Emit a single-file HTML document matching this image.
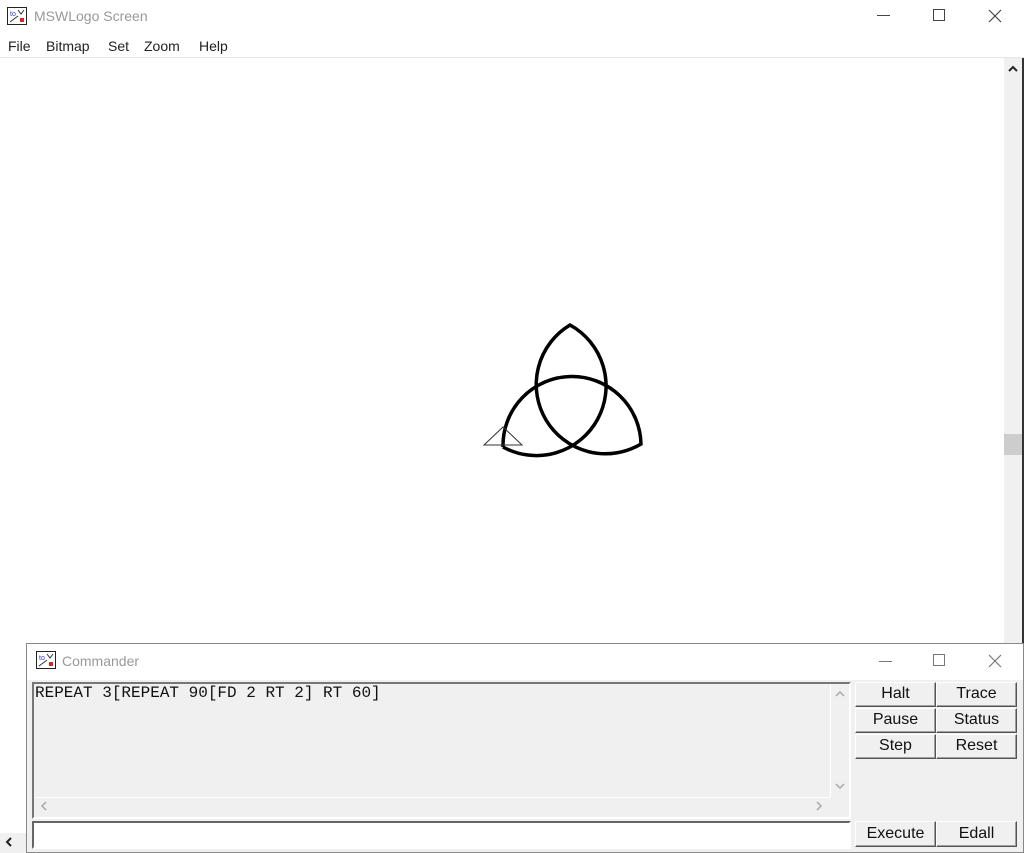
<!DOCTYPE html>
<html><head><style>
*{margin:0;padding:0;box-sizing:border-box}
body{width:1024px;height:853px;position:relative;background:#fff;font-family:"Liberation Sans",sans-serif;overflow:hidden}
.abs{position:absolute}
.title{color:#999;font-size:14px}
.menu span{position:absolute;top:38px;font-size:14px;color:#222}
.btn{position:absolute;background:#f0f0f0;border:1px solid;border-color:#fff #555 #555 #fff;box-shadow:inset -1px -1px 0 #a0a0a0;font-size:16px;text-align:center;line-height:22px;color:#111}
</style></head><body>
<svg class="abs" style="left:7px;top:7px" width="20" height="18"><rect x=".5" y=".5" width="19" height="17" fill="#fff" stroke="#222"/><text x="3" y="9" font-size="7" fill="#33c" font-family="Liberation Sans">to</text><path d="M11 3l3 4 3-4" stroke="#333" fill="none"/><path d="M3 15l8-6" stroke="#333"/><rect x="13" y="11" width="4" height="4" fill="#d22"/></svg>
<div class="abs title" style="left:34px;top:8px">MSWLogo Screen</div>
<div class="abs" style="left:877px;top:15px;width:13px;height:1px;background:#444"></div>
<div class="abs" style="left:933px;top:9px;width:12px;height:12px;border:1px solid #444"></div>
<svg class="abs" style="left:988px;top:9px" width="14" height="14"><path d="M1 1L13 13M13 1L1 13" stroke="#444" stroke-width="1.2"/></svg>
<div class="menu"><span style="left:8px">File</span><span style="left:46px">Bitmap</span><span style="left:108px">Set</span><span style="left:144px">Zoom</span><span style="left:199px">Help</span></div>
<div class="abs" style="left:0;top:57px;width:1024px;height:1px;background:#e6e6e6"></div>
<div class="abs" style="left:1004px;top:58px;width:18px;height:775px;background:#f0f0f0"></div>
<div class="abs" style="left:1004px;top:434px;width:18px;height:21px;background:#cdcdcd"></div>
<svg class="abs" style="left:1008px;top:65px" width="10" height="8"><path d="M1 6L5 2L9 6" stroke="#222" stroke-width="2" fill="none"/></svg>
<div class="abs" style="left:1022px;top:58px;width:2px;height:795px;background:#333"></div>
<div class="abs" style="left:0;top:833px;width:1004px;height:20px;background:#f0f0f0"></div>
<svg class="abs" style="left:5px;top:837px" width="8" height="10"><path d="M6 1L2 5L6 9" stroke="#222" stroke-width="2" fill="none"/></svg>
<svg class="abs" style="left:0;top:0" width="1024" height="853">
<path d="M503 447 A69 69 0 0 1 641 444 A69 69 0 0 1 570 325 A69 69 0 0 1 503 447" fill="none" stroke="#000" stroke-width="3.5"/>
<path d="M484 445 L503 427 L522 445 Z" fill="none" stroke="#333" stroke-width="1"/>
</svg>
<div class="abs" style="left:26px;top:643px;width:998px;height:210px;background:#f0f0f0;border:1px solid #888"></div>
<div class="abs" style="left:27px;top:644px;width:996px;height:36px;background:#fff"></div>
<svg class="abs" style="left:36px;top:651px" width="20" height="18"><rect x=".5" y=".5" width="19" height="17" fill="#fff" stroke="#222"/><text x="3" y="9" font-size="7" fill="#33c" font-family="Liberation Sans">to</text><path d="M11 3l3 4 3-4" stroke="#333" fill="none"/><path d="M3 15l8-6" stroke="#333"/><rect x="13" y="11" width="4" height="4" fill="#d22"/></svg>
<div class="abs title" style="left:62px;top:653px">Commander</div>
<div class="abs" style="left:879px;top:661px;width:13px;height:1px;background:#777"></div>
<div class="abs" style="left:933px;top:654px;width:12px;height:12px;border:1px solid #777"></div>
<svg class="abs" style="left:988px;top:654px" width="14" height="14"><path d="M1 1L13 13M13 1L1 13" stroke="#777" stroke-width="1.2"/></svg>
<div class="abs" style="left:32px;top:682px;width:819px;height:137px;border:2px solid;border-color:#777 #fff #fff #777;background:#f0f0f0"></div>
<div class="abs" style="left:35px;top:684px;font-family:'Liberation Mono',monospace;font-size:16px;color:#111">REPEAT 3[REPEAT 90[FD 2 RT 2] RT 60]</div>
<div class="abs" style="left:830px;top:684px;width:1px;height:113px;background:#fff"></div>
<div class="abs" style="left:34px;top:797px;width:796px;height:1px;background:#fff"></div>
<svg class="abs" style="left:835px;top:690px" width="10" height="8"><path d="M1 6L5 2L9 6" stroke="#aaa" stroke-width="1.5" fill="none"/></svg>
<svg class="abs" style="left:835px;top:782px" width="10" height="8"><path d="M1 2L5 6L9 2" stroke="#aaa" stroke-width="1.5" fill="none"/></svg>
<svg class="abs" style="left:40px;top:801px" width="8" height="10"><path d="M6 1L2 5L6 9" stroke="#aaa" stroke-width="1.5" fill="none"/></svg>
<svg class="abs" style="left:815px;top:801px" width="8" height="10"><path d="M2 1L6 5L2 9" stroke="#aaa" stroke-width="1.5" fill="none"/></svg>
<div class="abs" style="left:32px;top:821px;width:819px;height:28px;border:2px solid;border-color:#666 #fff #fff #666;background:#fff"></div>
<div class="btn" style="left:855px;top:682px;width:81px;height:25px">Halt</div>
<div class="btn" style="left:936px;top:682px;width:81px;height:25px">Trace</div>
<div class="btn" style="left:855px;top:708px;width:81px;height:25px">Pause</div>
<div class="btn" style="left:936px;top:708px;width:81px;height:25px">Status</div>
<div class="btn" style="left:855px;top:734px;width:81px;height:25px">Step</div>
<div class="btn" style="left:936px;top:734px;width:81px;height:25px">Reset</div>
<div class="btn" style="left:855px;top:821px;width:81px;height:26px;line-height:24px">Execute</div>
<div class="btn" style="left:936px;top:821px;width:81px;height:26px;line-height:24px">Edall</div>
</body></html>
